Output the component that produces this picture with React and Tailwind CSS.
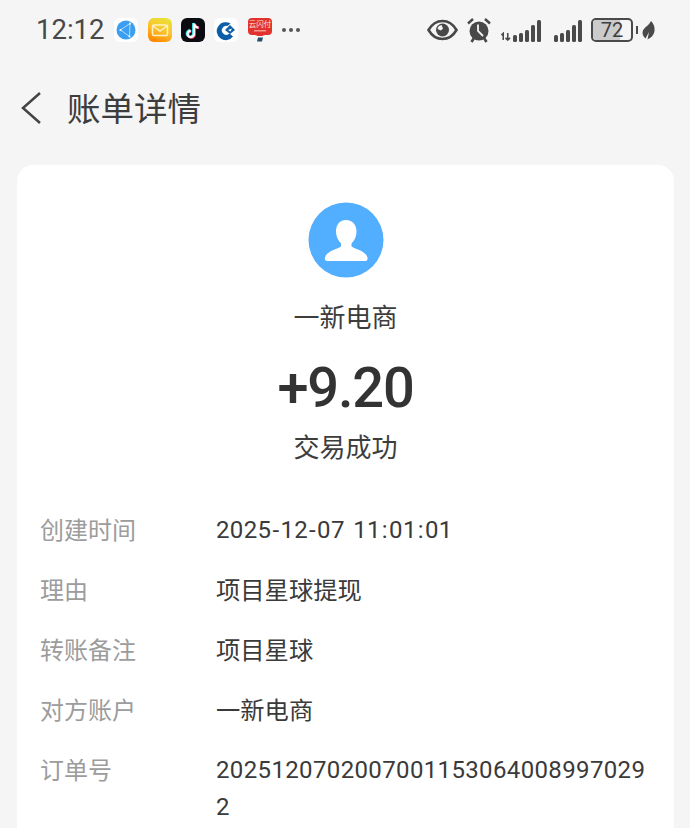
const sans = { fontFamily: '"Noto Sans CJK SC", Roboto, sans-serif' }
const roboto = { fontFamily: 'Roboto, sans-serif' }

function AppIcons() {
  return (
    <div className="flex items-center gap-[9.300px] ml-[10px]">
      <svg width="24" height="24" viewBox="0 0 24 24">
        <rect width="24" height="24" rx="6" fill="#fff" />
        <circle cx="12" cy="12" r="9.500" fill="#3a9ff0" />
        <path d="M16 5.500L6.500 12l9 6.500z" fill="none" stroke="#cfe8fc" strokeWidth="0.800" />
        <circle cx="16" cy="5.500" r="1.100" fill="#e8f4fe" />
        <circle cx="6.500" cy="12" r="1.100" fill="#e8f4fe" />
        <circle cx="15.500" cy="18.500" r="1.100" fill="#e8f4fe" />
      </svg>
      <svg width="24" height="24" viewBox="0 0 24 24">
        <defs>
          <linearGradient id="mail" x1="0.700" y1="0" x2="0.300" y2="1">
            <stop offset="0" stopColor="#e8e236" />
            <stop offset="0.500" stopColor="#fdc22e" />
            <stop offset="1" stopColor="#ff8400" />
          </linearGradient>
        </defs>
        <rect width="24" height="24" rx="6" fill="url(#mail)" />
        <rect x="4.500" y="7" width="15" height="10.500" rx="1.500" fill="none" stroke="#fff3c4" strokeWidth="1.500" />
        <path d="M5 8l7 5 7-5" fill="none" stroke="#fff3c4" strokeWidth="1.500" />
      </svg>
      <svg width="24" height="24" viewBox="0 0 24 24">
        <rect width="24" height="24" rx="6" fill="#0b0b12" />
        <path d="M12.200 5v10.500a3.200 3.200 0 1 1-3.200-3.200M12.200 5c.4 2.600 2 4 4.400 4.300" fill="none" stroke="#27d6dc" strokeWidth="2.400" />
        <path d="M13.800 6v10.500a3.200 3.200 0 1 1-3.200-3.200M13.800 6c.4 2.400 2 3.800 4.400 4" fill="none" stroke="#f0285a" strokeWidth="2.400" />
        <path d="M13 5.500v10.500a3.200 3.200 0 1 1-3.200-3.200M13 5.500c.4 2.500 2 3.900 4.400 4.200" fill="none" stroke="#fff" strokeWidth="2.200" />
      </svg>
      <svg width="24" height="24" viewBox="0 0 24 24">
        <rect width="24" height="24" rx="6" fill="#fff" />
        <path d="M16.500 5.500A9 9 0 1 0 19 18.500l-3.500-3a4.500 4.500 0 1 1-2-7.500z" fill="#0d5ea8" />
        <path d="M11 12l5-5 5 5-5 4z" fill="#0d5ea8" />
        <path d="M14 12l4-1.500-1.500 3z" fill="#fff" />
      </svg>
      <svg width="24" height="24" viewBox="0 0 24 24">
        <path d="M4 0h16a4 4 0 0 1 4 4v9a4 4 0 0 1-4 4h-3l-3 1h-4l-3-1H4a4 4 0 0 1-4-4V4a4 4 0 0 1 4-4z" fill="#e2322d" />
        <text x="12" y="9" textAnchor="middle" fontSize="7.500" fill="#fbe3dc" fontFamily="Noto Sans CJK SC, sans-serif">云闪付</text>
        <rect x="6" y="12" width="12" height="1.500" fill="#f7c7bc" opacity="0.7" />
        <path d="M10 19.500h5l-1 4H9z" fill="#25506b" />
      </svg>
      <div className="flex gap-[3px] ml-[1px]">
        <span className="w-[4px] h-[4px] rounded-full bg-[#555]" />
        <span className="w-[4px] h-[4px] rounded-full bg-[#555]" />
        <span className="w-[4px] h-[4px] rounded-full bg-[#555]" />
      </div>
    </div>
  )
}

function Bars({ heights }) {
  return (
    <div className="flex items-end gap-[2.500px] h-[23px]">
      {heights.map((h, i) => (
        <span key={i} className="w-[3.500px] rounded-[1.500px] bg-[#4a4a4a]" style={{ height: h }} />
      ))}
    </div>
  )
}

function SystemIcons() {
  return (
    <div className="flex items-center">
      <svg width="31" height="22" viewBox="0 0 31 22" className="mr-[9px]">
        <path d="M1.500 11C5 5 10 2 15.500 2S26 5 29.500 11C26 17 21 20 15.500 20S5 17 1.500 11z" fill="none" stroke="#484848" strokeWidth="2.600" />
        <circle cx="15.500" cy="11" r="6.500" fill="#484848" />
        <path d="M10.500 10a5 5 0 0 1 4-4l1.500 3.500-2 2z" fill="#f5f5f5" />
      </svg>
      <svg width="24" height="26" viewBox="0 0 24 26" className="mr-[9px]">
        <circle cx="12" cy="14" r="9.500" fill="#484848" />
        <path d="M11 7.500V14l5 5" fill="none" stroke="#f5f5f5" strokeWidth="1.800" />
        <path d="M1 6.500L6 2M23 6.500L18 2" stroke="#484848" strokeWidth="2.400" />
        <path d="M4.500 25l2.500-4M19.500 25L17 21" stroke="#484848" strokeWidth="2.600" />
      </svg>
      <svg width="11" height="9" viewBox="0 0 11 10" className="mr-[2px] self-end mb-[2px]">
        <path d="M1 3.500L3 1.500V9M8 1v8M5.500 6.500L8 9l2.500-2.500" fill="none" stroke="#4a4a4a" strokeWidth="1.700" />
      </svg>
      <div className="mr-[13.500px]">
        <Bars heights={[7, 9, 12, 17, 22]} />
      </div>
      <div className="mr-[9.500px]">
        <Bars heights={[7, 9, 12, 17, 22]} />
      </div>
      <div className="relative w-[42px] h-[24px] rounded-[5px] border-2 border-[#4a4a4a] overflow-hidden flex items-center justify-center">
        <div className="absolute inset-y-0 left-0 w-[72%] bg-[#cbcbcb]" />
        <span className="relative text-[20px] leading-none text-[#3d3d3d]" style={roboto}>72</span>
      </div>
      <span className="w-[2.500px] h-[8px] bg-[#4a4a4a] ml-[2.500px] mr-[4px]" />
      <svg width="13" height="19" viewBox="0 0 13 19">
        <path d="M9 0c3 3 4 6.500 3.500 10-.5 4-3.500 7-7 8.500L7 11 3.500 17.500C1 15.500 0 12.500.8 10 2 6.500 6.500 5 9 0z" fill="#4a4a4a" />
      </svg>
    </div>
  )
}

function Sep({ children }) {
  return <span className="mx-[1px]">{children}</span>
}

function Row({ label, children }) {
  return (
    <div className="flex">
      <div className="w-[176px] shrink-0 text-[24px] text-[#9c9c9c]">{label}</div>
      <div className="flex-1 min-w-0 break-all text-[#3a3a3a]">{children}</div>
    </div>
  )
}

export default function App() {
  return (
    <div className="w-[690px] h-[828px] overflow-hidden bg-[#f5f5f5]" style={sans}>
      <div className="flex items-center justify-between h-[60px] pl-[36px] pr-[35px]">
        <div className="flex items-center">
          <span className="text-[27.500px] leading-none text-[#484848]" style={roboto}>12:12</span>
          <AppIcons />
        </div>
        <SystemIcons />
      </div>

      <div className="flex items-center h-[96px] pl-[20px] pb-[1px]">
        <svg width="22" height="34" viewBox="0 0 22 34" fill="none" stroke="#444" strokeWidth="2.500">
          <path d="M20 2L3 17l17 15" />
        </svg>
        <h1 className="ml-[25px] mb-[2px] text-[33.500px] leading-none font-normal text-[#3d3d3d]">账单详情</h1>
      </div>

      <div className="ml-[17px] mr-[16px] mt-[9px] pt-[37px] pb-[40px] rounded-[16px] bg-white">
        <div className="flex flex-col items-center">
          <svg width="76" height="76" viewBox="0 0 76 76">
            <circle cx="38" cy="38" r="37.500" fill="#52aefe" />
            <path d="M38 18c7 0 10.500 5.500 10.500 11.500 0 5-2 9-5 12v3c3 2.500 14 4 16 11 .5 2-.5 3.500-2 3.500H19c-2 0-2.500-1.500-2-3.500 2-7 13-8.500 16-11v-3c-3-3-5-7-5-12C28 23.500 31 18 38 18z" fill="#fff" />
          </svg>
          <div className="mt-[18px] text-[26px] leading-[40px] text-[#3d3d3d]">一新电商</div>
          <div className="mt-[22px] text-[56px] leading-[60px] font-medium tracking-[-1.200px] text-[#333]" style={roboto}>+9.20</div>
          <div className="mt-[8px] text-[26px] leading-[40px] text-[#3d3d3d]">交易成功</div>
        </div>
        <div className="mt-[45px] pl-[23px] pr-[24px] flex flex-col gap-[24px] text-[24.300px] leading-[36px]">
          <Row label="创建时间">
            <div className="pt-[1px] h-[36px] text-[24px] tracking-[0.360px] whitespace-nowrap" style={roboto}>
              2025<Sep>-</Sep>12<Sep>-</Sep>07<Sep> </Sep>11<Sep>:</Sep>01<Sep>:</Sep>01
            </div>
          </Row>
          <Row label="理由">项目星球提现</Row>
          <Row label="转账备注">项目星球</Row>
          <Row label="对方账户">一新电商</Row>
          <Row label="订单号">
            <div className="pt-[1px] text-[24px] leading-[37px] tracking-[0.360px]" style={roboto}>20251207020070011530640089970292</div>
          </Row>
        </div>
      </div>
    </div>
  )
}
